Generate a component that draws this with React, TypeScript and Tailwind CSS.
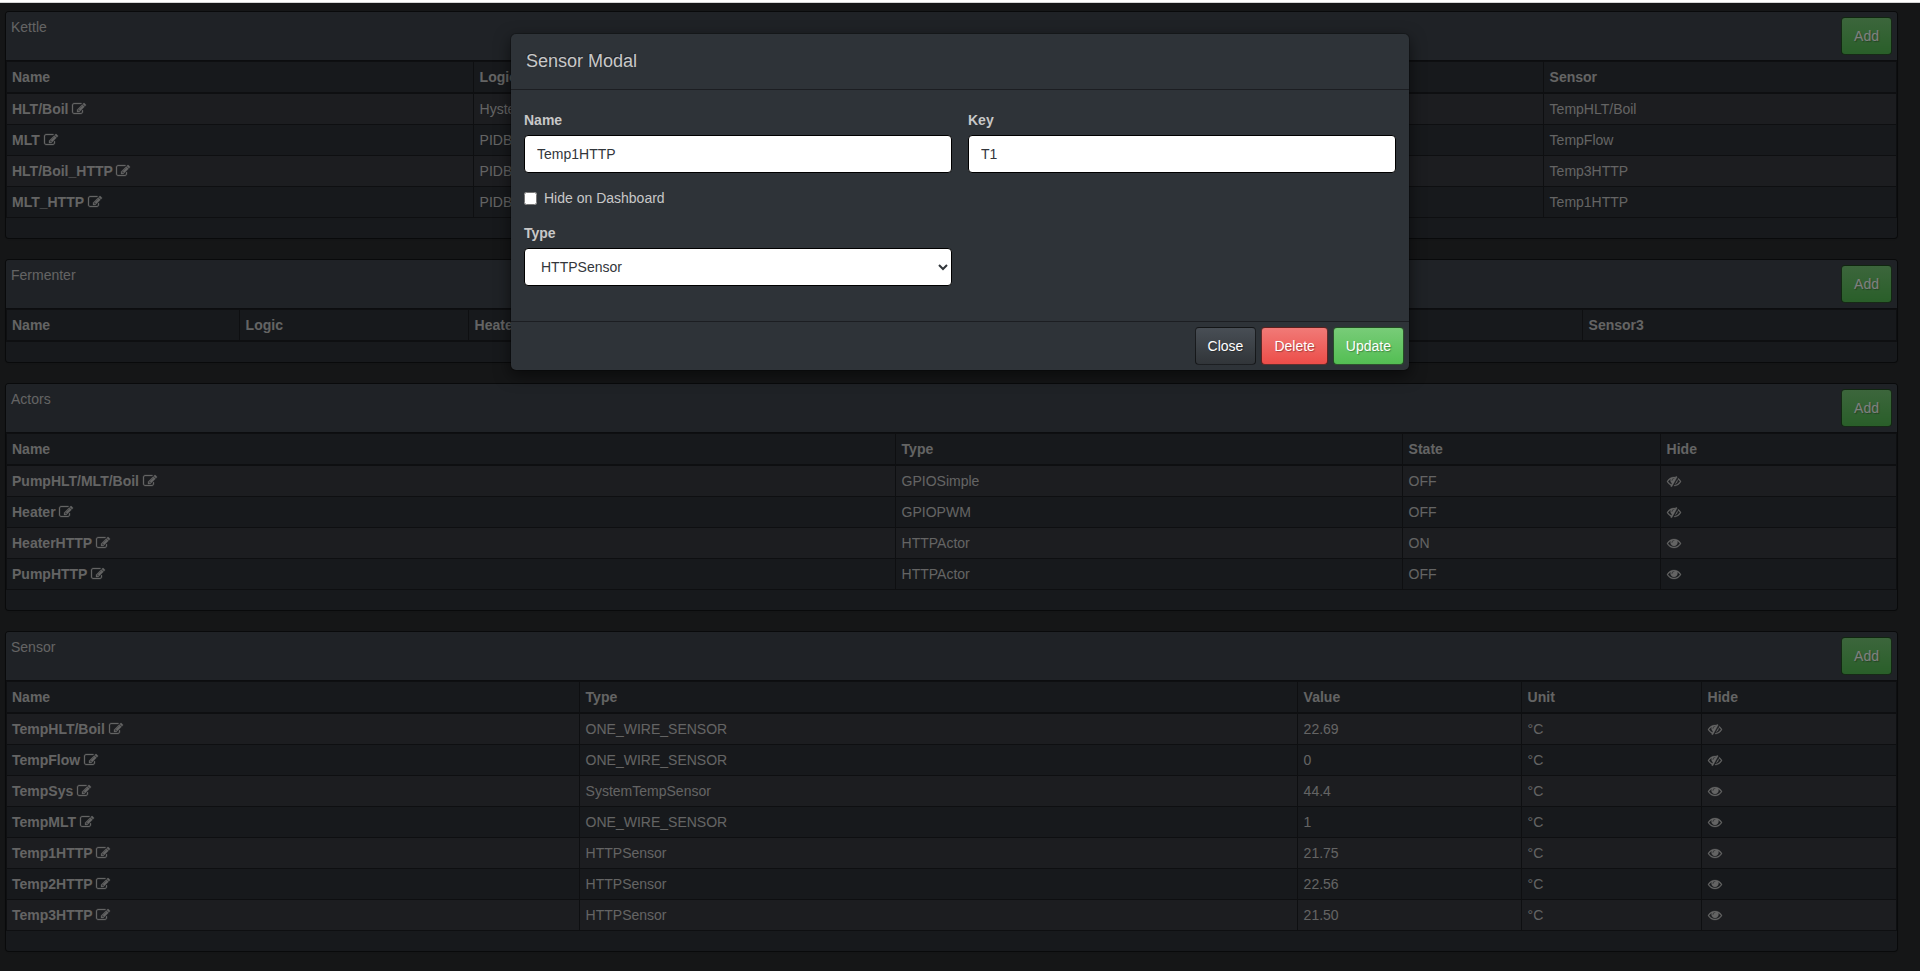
import { type ReactNode } from "react";

const ICONS = {
  edit: "M888 1184l116-116-152-152-116 116v56h96v96h56zm440-720q-16-16-33 1l-350 350q-17 17-1 33t33-1l350-350q17-17 1-33zm80 594v190q0 119-84.5 203.5t-203.5 84.5h-832q-119 0-203.5-84.5t-84.5-203.5v-832q0-119 84.5-203.5t203.5-84.5h832q63 0 117 25 15 7 18 23 3 17-9 29l-49 49q-14 14-32 8-23-6-45-6h-832q-66 0-113 47t-47 113v832q0 66 47 113t113 47h832q66 0 113-47t47-113v-126q0-13 9-22l64-64q15-15 35-7t20 29zm-96-738l288 288-672 672h-288v-288zm444 132l-92 92-288-288 92-92q28-28 68-28t68 28l152 152q28 28 28 68t-28 68z",
  eye: "M1664 960q-152-236-381-353 61 104 61 225 0 185-131.5 316.5t-316.5 131.5-316.5-131.5-131.5-316.5q0-121 61-225-229 117-381 353 133 205 333.5 326.5t434.5 121.5 434.5-121.5 333.5-326.5zm-720-384q0-20-14-34t-34-14q-125 0-214.5 89.5t-89.5 214.5q0 20 14 34t34 14 34-14 14-34q0-86 61-147t147-61q20 0 34-14t14-34zm848 384q0 34-20 69-140 230-376.5 368.5t-499.5 138.5-499.5-139-376.5-368q-20-35-20-69t20-69q140-229 376.5-368t499.5-139 499.5 139 376.5 368q20 35 20 69z",
  eyeSlash:
    "M555 1335l78-141q-87-63-136-159t-49-203q0-121 61-225-229 117-381 353 167 258 427 375zm389-759q0-20-14-34t-34-14q-125 0-214.5 89.5t-89.5 214.5q0 20 14 34t34 14 34-14 14-34q0-86 61-147t147-61q20 0 34-14t14-34zm363-191q0 7-1 9-106 189-316 567t-315 566l-49 89q-10 16-28 16-12 0-134-70-16-10-16-28 0-12 44-87-143-65-263.5-173t-208.5-245q-20-31-20-69t20-69q153-235 380-371t496-136q89 0 180 17l54-97q10-16 28-16 5 0 18 6t31 15.5 33 18.5 31.5 18.5 19.5 11.5q16 10 16 27zm37 447q0 139-79 253.5t-209 164.5l280-502q8 45 8 84zm448 128q0 35-20 69-39 64-109 145-150 172-347.5 267t-419.5 95l74-132q212-18 392.5-137t301.5-307q-115-179-282-294l63-112q95 64 182.5 153t144.5 184q20 34 20 69z",
};

function Icon({ name }: { name: keyof typeof ICONS }) {
  return (
    <svg
      viewBox="0 0 1792 1792"
      className="inline-block size-3.5 overflow-visible align-[-2px]"
      fill="currentColor"
      stroke="currentColor"
      strokeWidth={36}
    >
      <path d={ICONS[name]} />
    </svg>
  );
}

const BUTTON_COLORS = {
  default: "bg-[linear-gradient(#484e55,#3a3f44_60%,#313539)]",
  danger: "bg-[linear-gradient(#f17a77,#ee5f5b_60%,#ec4d49)]",
  success: "bg-[linear-gradient(#78cc78,#62c462_60%,#53be53)]",
};

function Button({ color, children }: { color: keyof typeof BUTTON_COLORS; children: ReactNode }) {
  return (
    <button
      className={`rounded border border-black/60 px-3 py-2 leading-5 text-white [text-shadow:1px_1px_1px_rgba(0,0,0,0.3)] ${BUTTON_COLORS[color]}`}
    >
      {children}
    </button>
  );
}

type PanelProps = {
  title: string;
  // the last column takes the remaining width
  widths: number[];
  head: string[];
  rows: ReactNode[][];
};

function Panel({ title, widths, head, rows }: PanelProps) {
  return (
    <section className="mb-5 rounded border border-black/60 bg-[#2e3338] shadow-[0_1px_1px_rgba(0,0,0,0.05)]">
      <div className="flex items-start justify-between rounded-t-[3px] border-b border-black/60 bg-[#3e444c] p-[5px]">
        <span>{title}</span>
        <Button color="success">Add</Button>
      </div>
      <table className="mb-5 w-full table-fixed border-collapse border border-[#1c1e22]">
        <colgroup>
          {head.map((h, i) => (
            <col key={h} style={{ width: widths[i] }} />
          ))}
        </colgroup>
        <thead>
          <tr>
            {head.map((h) => (
              <th
                key={h}
                className="border border-b-2 border-[#1c1e22] p-[5px] text-left font-bold not-first:pl-[5.6px]"
              >
                {h}
              </th>
            ))}
          </tr>
        </thead>
        <tbody>
          {rows.map((row, r) => (
            <tr key={r} className="odd:bg-[#383a40]">
              {row.map((cell, c) => (
                <td key={c} className="border border-[#1c1e22] p-[5px] not-first:pl-[5.6px]">
                  {c === 0 ? (
                    <b>
                      {cell} <Icon name="edit" />
                    </b>
                  ) : (
                    cell
                  )}
                </td>
              ))}
            </tr>
          ))}
        </tbody>
      </table>
    </section>
  );
}

const visible = <Icon name="eye" />;
const hidden = <Icon name="eyeSlash" />;

const PANELS: PanelProps[] = [
  {
    title: "Kettle",
    widths: [467, 1070],
    head: ["Name", "Logic", "Sensor"],
    rows: [
      ["HLT/Boil", "Hysteresis", "TempHLT/Boil"],
      ["MLT", "PIDBoil", "TempFlow"],
      ["HLT/Boil_HTTP", "PIDBoil", "Temp3HTTP"],
      ["MLT_HTTP", "PIDBoil", "Temp1HTTP"],
    ],
  },
  {
    title: "Fermenter",
    widths: [233, 229, 1114],
    head: ["Name", "Logic", "Heater", "Sensor3"],
    rows: [],
  },
  {
    title: "Actors",
    widths: [889, 507, 258],
    head: ["Name", "Type", "State", "Hide"],
    rows: [
      ["PumpHLT/MLT/Boil", "GPIOSimple", "OFF", hidden],
      ["Heater", "GPIOPWM", "OFF", hidden],
      ["HeaterHTTP", "HTTPActor", "ON", visible],
      ["PumpHTTP", "HTTPActor", "OFF", visible],
    ],
  },
  {
    title: "Sensor",
    widths: [573, 718, 224, 180],
    head: ["Name", "Type", "Value", "Unit", "Hide"],
    rows: [
      ["TempHLT/Boil", "ONE_WIRE_SENSOR", "22.69", "°C", hidden],
      ["TempFlow", "ONE_WIRE_SENSOR", "0", "°C", hidden],
      ["TempSys", "SystemTempSensor", "44.4", "°C", visible],
      ["TempMLT", "ONE_WIRE_SENSOR", "1", "°C", visible],
      ["Temp1HTTP", "HTTPSensor", "21.75", "°C", visible],
      ["Temp2HTTP", "HTTPSensor", "22.56", "°C", visible],
      ["Temp3HTTP", "HTTPSensor", "21.50", "°C", visible],
    ],
  },
];

const control = "block h-[38px] w-full rounded border border-black bg-white px-3 py-2 text-[#32363b]";

function SensorModal() {
  return (
    <div className="w-[900px] rounded-md border border-black/20 bg-[#2e3338] bg-clip-padding shadow-[0_5px_15px_rgba(0,0,0,0.5)]">
      <div className="h-14 border-b border-[#1c1e22] p-[15px]">
        <h4 className="text-lg leading-[25px] [text-shadow:-1px_-1px_0_rgba(0,0,0,0.3)]">Sensor Modal</h4>
      </div>
      <div className="grid h-[231px] grid-cols-2 content-start gap-x-4 px-[13px] pt-5">
        <div>
          <label className="mb-[5px] block font-bold">Name</label>
          <input className={control} defaultValue="Temp1HTTP" />
        </div>
        <div>
          <label className="mb-[5px] block font-bold">Key</label>
          <input className={control} defaultValue="T1" />
        </div>
        <label className="col-span-2 mt-[15px] flex h-5 items-center gap-[7px]">
          <input type="checkbox" className="size-[13px]" />
          Hide on Dashboard
        </label>
        <div className="mt-[15px]">
          <label className="mb-[5px] block font-bold">Type</label>
          <select className={control} defaultValue="HTTPSensor">
            <option>HTTPSensor</option>
          </select>
        </div>
      </div>
      <div className="flex justify-end gap-[5px] border-t border-[#1c1e22] p-[5px]">
        <Button color="default">Close</Button>
        <Button color="danger">Delete</Button>
        <Button color="success">Update</Button>
      </div>
    </div>
  );
}

export default function App() {
  return (
    <div className="relative h-[971px] overflow-hidden bg-[#2a2c2e] font-['Liberation_Sans',Arial,sans-serif] text-sm leading-5 text-[#c8c8c8]">
      <div className="h-[3px] border-b border-[#d5d5d5] bg-white" />
      <main className="pt-2 pr-[22px] pl-[5px]">
        {PANELS.map((p) => (
          <Panel key={p.title} {...p} />
        ))}
      </main>
      <div className="absolute inset-x-0 top-[3px] bottom-0 flex items-start justify-center bg-black/50 pt-[30px]">
        <SensorModal />
      </div>
    </div>
  );
}
